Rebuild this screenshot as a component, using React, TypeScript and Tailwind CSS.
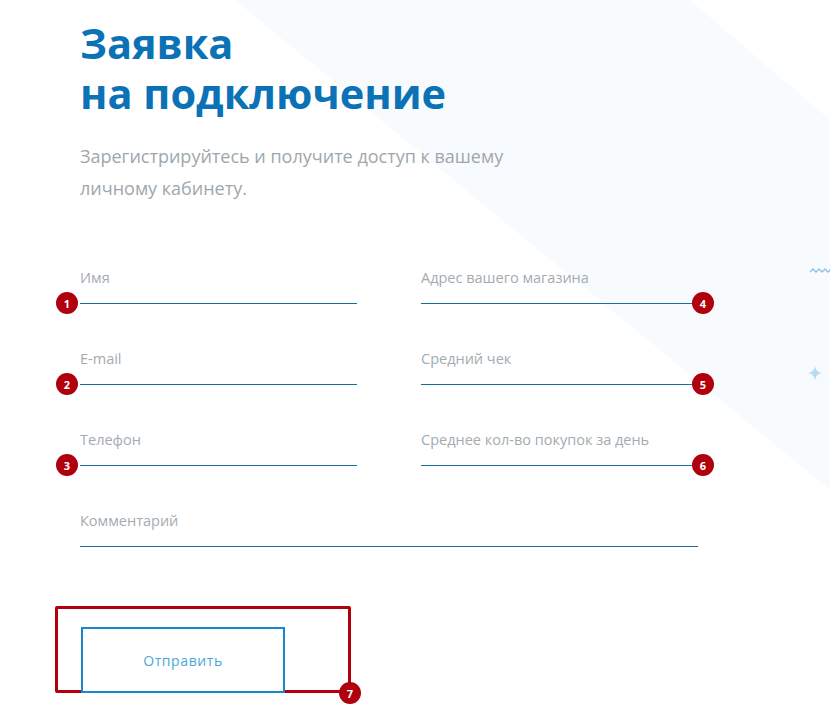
import React from 'react';

const font = { fontFamily: '"Open Sans", "Noto Sans", sans-serif' };

const Badge = ({ n, className }: { n: number; className: string }) => (
  <span
    className={`absolute flex h-[22px] w-[22px] items-center justify-center rounded-full bg-[#b0000e] text-[11px] font-bold leading-none text-white ${className}`}
  >
    {n}
  </span>
);

const Field = ({ label, badge, side }: { label: string; badge?: number; side?: 'left' | 'right' }) => (
  <div className="relative">
    <div className="h-[35px] text-[14.5px] leading-[20px] text-[#a3abb1]">{label}</div>
    <div className="h-px bg-[#1f6c9c]" />
    {badge && side === 'left' && <Badge n={badge} className="left-[-24px] top-[24px]" />}
    {badge && side === 'right' && <Badge n={badge} className="right-[-16px] top-[24px]" />}
  </div>
);

export default function App() {
  return (
    <div className="relative h-[725px] w-[830px] overflow-hidden bg-white" style={font}>
      <svg className="absolute inset-0" width="830" height="725" viewBox="0 0 830 725">
        <polygon points="235,0 690,0 830,120 830,490" fill="#f7fbfe" />
        <path d="M810 272 l3 -3 l3 3 l3 -3 l3 3 l3 -3 l3 3 l3 -3" fill="none" stroke="#8fc3e6" strokeWidth="1.3" />
        <path d="M815 366 Q816 372 822 373 Q816 374 815 380 Q814 374 808 373 Q814 372 815 366 Z" fill="#b7dbf4" />
      </svg>

      <div className="relative pl-[80px] pt-[18px]">
        <h1 className="text-[41.5px] font-bold leading-[50px] text-[#0b72b6]">
          <span className="block">Заявка</span>
          <span className="block">на подключение</span>
        </h1>
        <p className="mt-[22px] w-[460px] text-[18px] leading-[32px] text-[#9ea7ad]">
          Зарегистрируйтесь и получите доступ к вашему личному кабинету.
        </p>

        <div className="mt-[64px] grid w-[618px] grid-cols-2 gap-x-[64px] gap-y-[45px]">
          <Field label="Имя" badge={1} side="left" />
          <Field label="Адрес вашего магазина" badge={4} side="right" />
          <Field label="E-mail" badge={2} side="left" />
          <Field label="Средний чек" badge={5} side="right" />
          <Field label="Телефон" badge={3} side="left" />
          <Field label="Среднее кол-во покупок за день" badge={6} side="right" />
          <div className="col-span-2">
            <Field label="Комментарий" />
          </div>
        </div>

        <div className="relative mt-[59px] ml-[-25px] w-[296px] rounded-[2px] border-[3px] border-[#b0000e] pl-[23px] pt-[18px]">
          <button className="mb-[-3px] flex h-[66px] w-[204px] items-center justify-center border-2 border-[#1a87cc] bg-white text-[14px] tracking-[0.6px] text-[#4ca7d6]">
            Отправить
          </button>
          <Badge n={7} className="bottom-[-14px] right-[-13px]" />
        </div>
      </div>
    </div>
  );
}
